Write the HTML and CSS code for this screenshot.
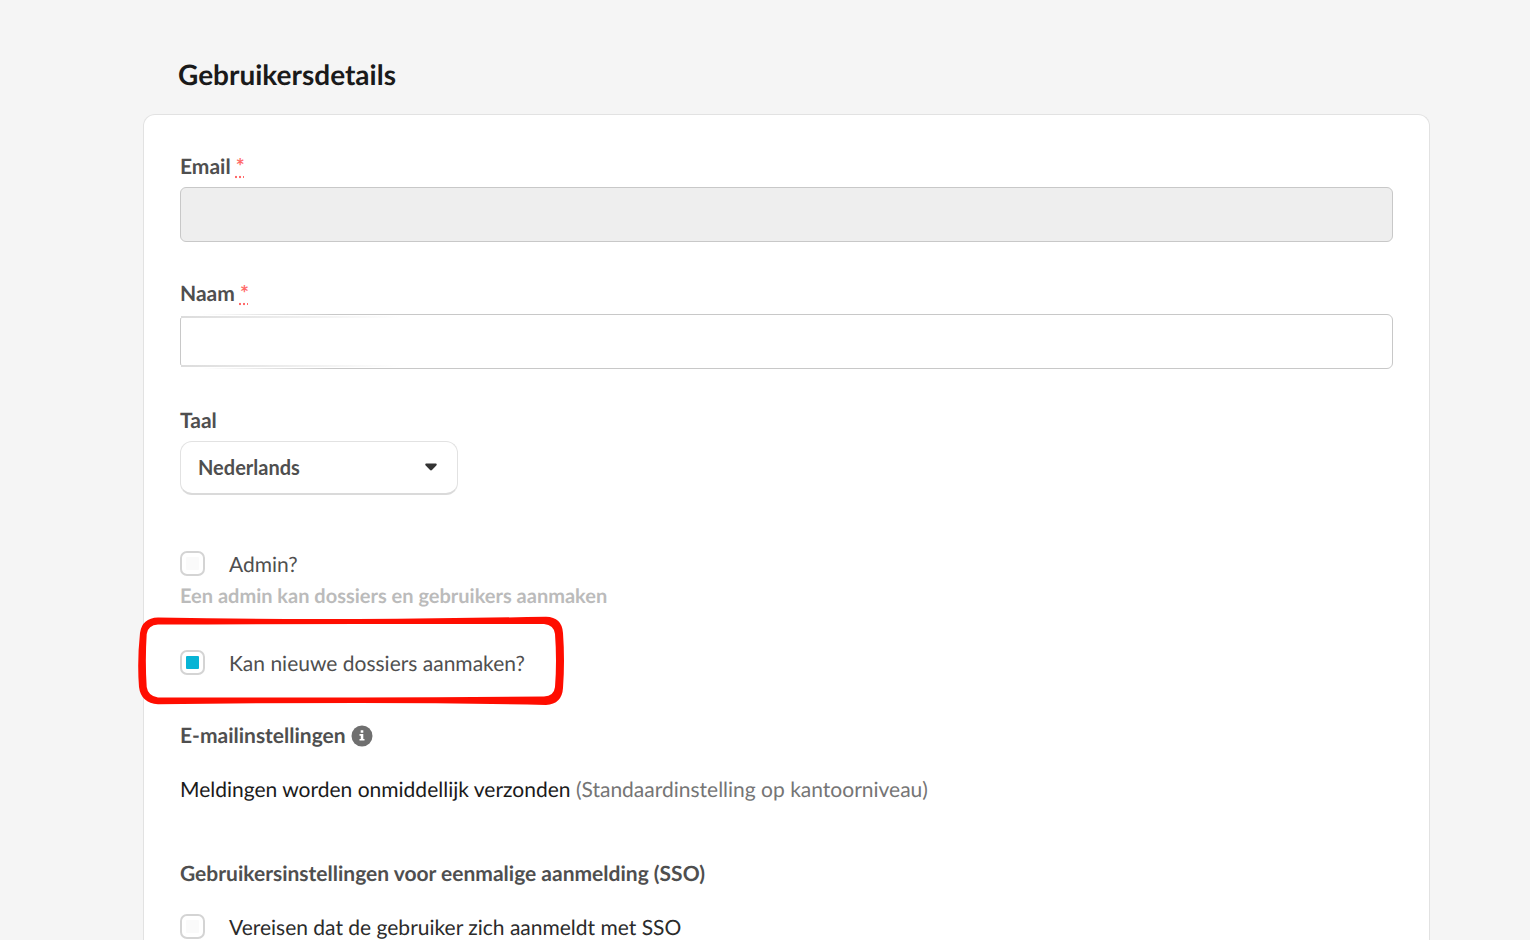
FILE: index.html
```html
<!DOCTYPE html>
<html lang="nl">
<head>
    <meta charset="UTF-8">
    <meta name="viewport" content="width=device-width, initial-scale=1.0">
    <title>Gebruikersdetails</title>
    <link rel="stylesheet" href="styles.css">
</head>
<body>

<main class="page">
    <h1>Gebruikersdetails</h1>

    <form class="card">
        <div class="field">
            <label for="email">Email <abbr title="verplicht">*</abbr></label>
            <input type="email" id="email" name="email" disabled>
        </div>

        <div class="field faded">
            <label for="name">Naam <abbr title="verplicht">*</abbr></label>
            <input type="text" id="name" name="name">
        </div>

        <div class="field">
            <label for="language">Taal</label>
            <div class="select">
                <select id="language" name="language">
                    <option value="nl">Nederlands</option>
                    <option value="fr">Frans</option>
                    <option value="en">Engels</option>
                </select>
                <svg class="caret" viewBox="0 0 12 8" aria-hidden="true"><path d="M1.2 0.5h9.6q1.6 .5 .5 1.9L7.2 6.8Q6 8 4.8 6.8L.7 2.4Q-.4 1 1.2.5z"/></svg>
            </div>
        </div>

        <div class="check">
            <input type="checkbox" id="admin" name="admin">
            <label for="admin">Admin?</label>
        </div>
        <p class="hint">Een admin kan dossiers en gebruikers aanmaken</p>

        <div class="check marked">
            <input type="checkbox" id="create" name="create" checked>
            <label for="create">Kan nieuwe dossiers aanmaken?</label>
            <svg class="marker" viewBox="0 0 426 88" aria-hidden="true">
                <path fill-rule="evenodd" d="M20 .5Q120 2.500 220 2Q320 1.500 408 -.3Q424 0 425 16Q427 44 425 71Q424 87 408 88Q320 86 220 86Q120 86 20 87.300Q3 86 1 70Q-1 44 2 16Q4 1 20 .5zM20 7.500Q10 8 8.700 17Q7 44 8.700 70Q10 79 20 80.500Q120 80.500 220 80.500Q320 80 406 79.500Q416 79 417 70Q419 44 417 17Q416 8 406 7Q320 7 220 7Q120 7 20 7.500z"/>
            </svg>
        </div>

        <h2>E-mailinstellingen
            <svg class="info" viewBox="0 0 22 22" role="img" aria-label="Info">
                <circle cx="11" cy="11" r="10.500"/>
                <path d="M9.700 5.200h2.600v2.500H9.700zM8.500 9h3.800v4.900h1.200v1.700H8.500v-1.700h1.300v-3.200H8.500z"/>
            </svg>
        </h2>
        <p class="setting">Meldingen worden onmiddellijk verzonden <span>(Standaardinstelling op kantoorniveau)</span></p>

        <h2>Gebruikersinstellingen voor eenmalige aanmelding (SSO)</h2>
        <div class="check dark">
            <input type="checkbox" id="sso" name="sso">
            <label for="sso">Vereisen dat de gebruiker zich aanmeldt met SSO</label>
        </div>
    </form>
</main>

</body>
</html>
```
FILE: styles.css
```css
* {
    box-sizing: border-box;
}
body {
    margin: 0;
    background-color: #f5f5f5;
    color: #4f4f4f;
    font-family: Lato, sans-serif;
    font-size: 21px;
    line-height: 28px;
    text-rendering: geometricPrecision;
}
.page {
    display: flex;
    flex-direction: column;
    min-height: 100vh;
    padding: 57px 100px 0 143px;
}
h1 {
    margin: 0 0 23px 35px;
    color: #1a1a1a;
    font-size: 28px;
    line-height: 34px;
}
.card {
    flex: 1;
    padding: 38px 36px 0;
    background-color: #fff;
    border: 1px solid #e2e2e2;
    border-bottom: none;
    border-radius: 12px 12px 0 0;
}
.field {
    margin-bottom: 38px;
}
.field label {
    display: block;
    margin-bottom: 6px;
    font-weight: 700;
}
abbr {
    color: #ff6b6b;
    font-weight: 700;
}
.field input {
    display: block;
    width: 100%;
    height: 55px;
    padding: 0 16px;
    background-color: #fff;
    border: 1px solid #c8c8c8;
    border-radius: 6px;
    font: inherit;
}
.field input:disabled {
    background-color: #eee;
}
/* the border of the name box fades out at its left end */
.faded {
    position: relative;
}
.faded::before,
.faded::after {
    content: "";
    position: absolute;
    left: 0;
    width: 220px;
    height: 4px;
    background:
        linear-gradient(to right, #dcdcdc, rgba(255, 255, 255, 0)) 1px 100% / 100% 2px no-repeat,
        linear-gradient(to right, #fff 10%, rgba(255, 255, 255, 0) 70%);
}
.faded::before {
    top: 34px;
}
.faded::after {
    bottom: 0;
    transform: scaleY(-1);
}
.select {
    position: relative;
    width: 278px;
}
.select select {
    display: block;
    width: 100%;
    height: 54px;
    padding: 0 17px 2px;
    appearance: none;
    background-color: #fff;
    border: 1px solid #e2e2e2;
    border-bottom: 2px solid #dadada;
    border-radius: 12px;
    color: #4f4f4f;
    font: 700 20px Lato, sans-serif;
}
.caret {
    position: absolute;
    top: 22px;
    right: 21px;
    width: 12px;
    height: 8px;
    fill: #333;
    pointer-events: none;
}
.check {
    display: flex;
    align-items: flex-start;
    gap: 24px;
    margin-top: 56px;
}
.check input {
    width: 25px;
    height: 25px;
    margin: 0;
    padding: 4px;
    appearance: none;
    background: #fafafa content-box;
    border: 2px solid #d4d4d4;
    border-radius: 7px;
}
.check input:checked {
    background-color: #07b4d5;
}
.dark label {
    color: #2b2b2b;
}
.hint {
    margin: 3px 0 0;
    color: #bbb;
    font-size: 20px;
    font-weight: 700;
}
/* hand-drawn red box around the highlighted option */
.marked {
    position: relative;
    margin-top: 40px;
}
.marker {
    position: absolute;
    top: -33px;
    left: -42px;
    width: 426px;
    height: 88px;
    overflow: visible;
    fill: #ff0d00;
    pointer-events: none;
}
h2 {
    display: flex;
    align-items: center;
    gap: 5px;
    margin: 44px 0 0;
    font-size: 21px;
    line-height: 28px;
}
.info {
    width: 22px;
    height: 22px;
}
.info circle {
    fill: #6f6f6f;
}
.info path {
    fill: #fff;
}
.setting {
    margin: 26px 0 56px;
    color: #1a1a1a;
}
.setting span {
    color: #757575;
}
.setting + h2 {
    margin-top: 0;
}
h2 + .check {
    margin-top: 26px;
}
```
